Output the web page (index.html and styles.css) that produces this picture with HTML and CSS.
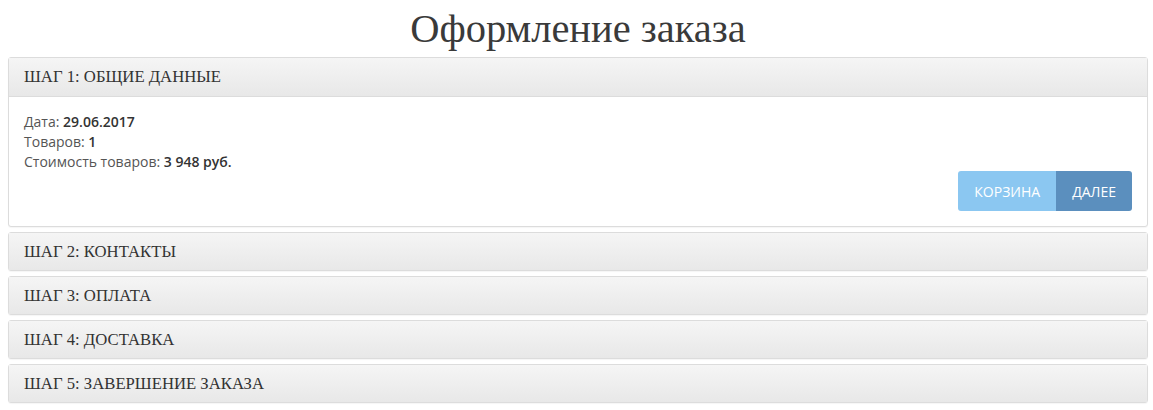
FILE: index.html
```html
<!DOCTYPE html>
<html lang="ru">
<head>
<meta charset="utf-8">
<title>Оформление заказа</title>
<link rel="stylesheet" href="styles.css">
</head>
<body>
<div class="page">
  <h1 class="title">Оформление заказа</h1>
  <div class="panel">
    <div class="panel-heading">Шаг 1: Общие данные</div>
    <div class="panel-body">
      <div class="info">Дата: <b>29.06.2017</b></div>
      <div class="info">Товаров: <b>1</b></div>
      <div class="info">Стоимость товаров: <b>3&nbsp;948 руб.</b></div>
      <div class="actions">
        <div class="btn-group">
          <button class="btn btn-cart">Корзина</button>
          <button class="btn btn-next">Далее</button>
        </div>
      </div>
    </div>
  </div>
  <div class="panel"><div class="panel-heading collapsed">Шаг 2: Контакты</div></div>
  <div class="panel"><div class="panel-heading collapsed">Шаг 3: Оплата</div></div>
  <div class="panel"><div class="panel-heading collapsed">Шаг 4: Доставка</div></div>
  <div class="panel"><div class="panel-heading collapsed">Шаг 5: Завершение заказа</div></div>
</div>
</body>
</html>
```
FILE: styles.css
```css
html, body {
  margin: 0;
  padding: 0;
  background: #fff;
}
.page {
  padding: 0 5px 0 8px;
}
.title {
  margin: 0;
  padding-top: 6px;
  height: 57px;
  box-sizing: border-box;
  text-align: center;
  font-family: "Liberation Serif", serif;
  font-weight: normal;
  font-size: 40.5px;
  line-height: 46px;
  color: #3a3a3a;
}
.panel {
  border: 1px solid #dcdcdc;
  border-radius: 3px;
  margin-bottom: 5px;
  background: #fff;
  box-shadow: 0 1px 1px rgba(0,0,0,0.04);
}
.panel-heading {
  padding: 10px 15px;
  line-height: 18px;
  font-family: "Liberation Serif", serif;
  font-size: 16.7px;
  text-transform: uppercase;
  color: #333;
  background: linear-gradient(to bottom, #f5f5f5, #e8e8e8);
  border-bottom: 1px solid #dcdcdc;
}
.panel-heading.collapsed {
  border-bottom: 0;
  line-height: 17px;
}
.panel-body {
  padding: 15px;
  font-family: "Open Sans", sans-serif;
  font-size: 14px;
  line-height: 20px;
  color: #555;
}
.info b {
  font-weight: 600;
  color: #333;
}
.actions {
  display: flex;
  justify-content: flex-end;
  margin-top: -1px;
}
.btn-group {
  display: flex;
}
.btn {
  border: 0;
  height: 40px;
  padding: 0 16px;
  font-family: "Open Sans", sans-serif;
  font-size: 14px;
  text-transform: uppercase;
  color: #fff;
  cursor: pointer;
}
.btn-cart {
  background: #8bc7f1;
  border-radius: 3px 0 0 3px;
}
.btn-next {
  background: #5b8fbe;
  border-radius: 0 3px 3px 0;
}
```
